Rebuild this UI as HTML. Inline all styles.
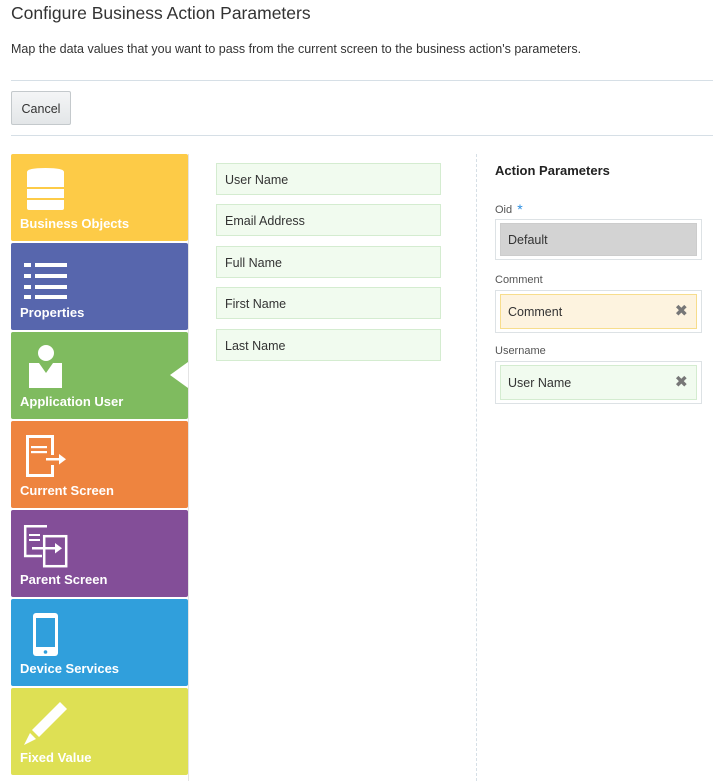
<!DOCTYPE html>
<html><head><style>
*{box-sizing:border-box;margin:0;padding:0}
body{width:713px;height:781px;background:#fff;font-family:"Liberation Sans","DejaVu Sans",sans-serif;color:#333;position:relative;overflow:hidden}
.abs{position:absolute}
h1{position:absolute;left:11px;top:3px;font-size:17.5px;font-weight:normal;color:#333}
.desc{left:11px;top:42px;font-size:12.5px;color:#333}
.hr{left:11px;right:0;height:1px;background:#d6dfe6}
.btn{left:11px;top:91px;width:60px;height:34px;border:1px solid #c4c9cc;border-radius:2px;background:linear-gradient(#f4f5f6,#e3e6e8);font-size:12.5px;text-align:center;line-height:34px;color:#333}
.tile{position:absolute;left:11px;width:177px;height:87px;border-radius:2px;color:#fff;font-weight:bold;font-size:13px}
.tile span{position:absolute;left:9px;bottom:10px}
.tile svg{position:absolute;left:9px;top:8px}
.f{position:absolute;left:216px;width:225px;height:32px;background:#f1fbef;border:1px solid #d4ecd0;font-size:12.5px;line-height:32px;padding-left:8px;color:#333}
.lbl{position:absolute;left:495px;font-size:11px;color:#555}
.ob{position:absolute;left:495px;width:207px;border:1px solid #dde2e5;padding:3px 4px}
.ib{height:33px;font-size:12.5px;line-height:32px;padding-left:7px;position:relative;color:#333}
.ib.t{height:35px;line-height:34px}
.x{position:absolute;right:8px;top:0;font-size:16px;font-weight:bold;color:#777}
</style></head><body>
<h1>Configure Business Action Parameters</h1>
<div class="abs desc">Map the data values that you want to pass from the current screen to the business action's parameters.</div>
<div class="abs hr" style="top:80px"></div>
<div class="abs btn">Cancel</div>
<div class="abs hr" style="top:135px"></div>
<div class="abs" style="left:188px;top:154px;width:1px;height:627px;background:#e4e4e4"></div>

<div class="tile" style="top:154px;background:#fdcb47"><svg width="50" height="50" viewBox="0 0 50 50"><g fill="#fff"><path d="M7 10 Q7 6 25.5 6 Q44 6 44 10 V25 H7Z"/><rect x="7" y="27" width="37" height="9"/><path d="M7 38H44V46Q44 48 42 48H9Q7 48 7 46Z"/></g></svg><span>Business Objects</span></div>
<div class="tile" style="top:243px;background:#5766ad"><svg width="50" height="50" viewBox="0 0 50 50"><g fill="#fff"><rect x="4" y="12" width="7" height="4"/><rect x="15" y="12" width="32" height="4"/><rect x="4" y="23" width="7" height="4"/><rect x="15" y="23" width="32" height="4"/><rect x="4" y="34" width="7" height="4"/><rect x="15" y="34" width="32" height="4"/><rect x="4" y="44" width="7" height="4"/><rect x="15" y="44" width="32" height="4"/></g></svg><span>Properties</span></div>
<div class="tile" style="top:332px;background:#7fbb5f"><svg width="50" height="50" viewBox="0 0 50 50"><g fill="#fff"><circle cx="26" cy="13" r="8"/><path d="M19 23 L26 33 L33 23 H42 V48 H9 V23Z"/></g></svg><span>Application User</span><div class="abs" style="right:0;top:30px;width:0;height:0;border-top:13px solid transparent;border-bottom:13px solid transparent;border-right:18px solid #fff"></div></div>
<div class="tile" style="top:421px;background:#ee843f"><svg width="50" height="50" viewBox="0 0 50 50"><path d="M32.5 26 V7.5 H7.5 V46.5 H32.5 V36" fill="none" stroke="#fff" stroke-width="3"/><g fill="#fff"><rect x="11" y="17" width="16" height="2.2"/><rect x="11" y="22" width="16" height="2.2"/><rect x="26" y="29" width="14" height="2.5"/><path d="M39 25 L46 30.2 L39 35.5Z"/></g></svg><span>Current Screen</span></div>
<div class="tile" style="top:510px;background:#834e98"><svg width="50" height="50" viewBox="0 0 50 50"><g fill="none" stroke="#fff" stroke-width="2.5"><path d="M27 8.2 H5.2 V38 H22"/><rect x="24.2" y="18.2" width="22" height="30"/></g><g fill="#fff"><rect x="9" y="16" width="11" height="2"/><rect x="9" y="21" width="11" height="2"/><rect x="12" y="29" width="24" height="2.5"/><path d="M35 25 L42 30.2 L35 35.5Z"/></g></svg><span>Parent Screen</span></div>
<div class="tile" style="top:599px;background:#309fdc"><svg width="50" height="50" viewBox="0 0 50 50"><rect x="13" y="6" width="25" height="43" rx="3" fill="#fff"/><rect x="16" y="11" width="19" height="29" fill="#309fdc"/><circle cx="25.5" cy="45" r="1.8" fill="#309fdc"/></svg><span>Device Services</span></div>
<div class="tile" style="top:688px;background:#dee054"><svg width="50" height="50" viewBox="0 0 50 50"><g fill="#fff"><path d="M40 6 L47 13 L19 41 L12 34Z"/><path d="M10 37 L16 43 L4 49Z"/></g></svg><span>Fixed Value</span></div>

<div class="f" style="top:163px">User Name</div>
<div class="f" style="top:204px">Email Address</div>
<div class="f" style="top:246px">Full Name</div>
<div class="f" style="top:287px">First Name</div>
<div class="f" style="top:329px">Last Name</div>

<div class="abs" style="left:476px;top:154px;height:627px;border-left:1px dashed #d6dfe6"></div>
<div class="abs" style="left:495px;top:163px;font-size:13px;font-weight:bold;color:#222">Action Parameters</div>
<div class="lbl" style="top:204px">Oid <span style="color:#2a8de0;font-size:14px;vertical-align:top;position:relative;top:-3px;margin-left:2px">*</span></div>
<div class="ob" style="top:219px"><div class="ib" style="background:#d3d3d3;border:1px solid #ccc">Default</div></div>
<div class="lbl" style="top:274px">Comment</div>
<div class="ob" style="top:290px"><div class="ib t" style="background:#fdf3df;border:1px solid #f7dd8c">Comment<span class="x">✖</span></div></div>
<div class="lbl" style="top:345px">Username</div>
<div class="ob" style="top:361px"><div class="ib t" style="background:#f1fbef;border:1px solid #d4ecd0">User Name<span class="x">✖</span></div></div>
</body></html>
